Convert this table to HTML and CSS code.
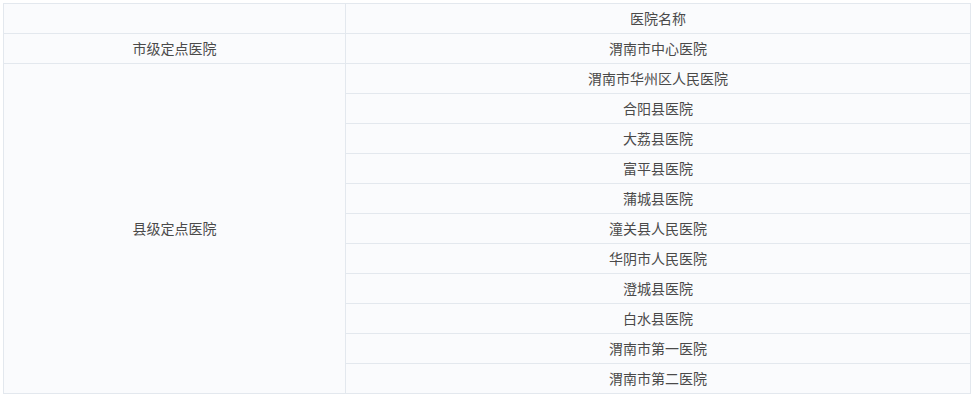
FILE: index.html
```html
<!DOCTYPE html>
<html lang="zh">
<head>
<meta charset="utf-8">
<link rel="stylesheet" href="styles.css">
</head>
<body>
<table class="hosp">
  <tr><td class="col-a"></td><td class="col-b">医院名称</td></tr>
  <tr><td>市级定点医院</td><td>渭南市中心医院</td></tr>
  <tr><td rowspan="11">县级定点医院</td><td>渭南市华州区人民医院</td></tr>
  <tr><td>合阳县医院</td></tr>
  <tr><td>大荔县医院</td></tr>
  <tr><td>富平县医院</td></tr>
  <tr><td>蒲城县医院</td></tr>
  <tr><td>潼关县人民医院</td></tr>
  <tr><td>华阴市人民医院</td></tr>
  <tr><td>澄城县医院</td></tr>
  <tr><td>白水县医院</td></tr>
  <tr><td>渭南市第一医院</td></tr>
  <tr><td>渭南市第二医院</td></tr>
</table>
</body>
</html>
```
FILE: styles.css
```css
html, body {
  background: #ffffff;
}
body {
  margin: 3px 0 0 3px;
  font-family: "Noto Sans CJK SC", "Noto Sans", sans-serif;
  font-size: 14px;
  color: #4a4a4a;
}
.hosp {
  border-collapse: collapse;
  width: 968px;
  background: #fafbfd;
  table-layout: fixed;
}
.hosp td {
  border: 1px solid #e3e8ee;
  height: 28px;
  padding: 0 0 1px;
  text-align: center;
  vertical-align: middle;
  line-height: 20px;
}
.col-a { width: 341px; }
```
